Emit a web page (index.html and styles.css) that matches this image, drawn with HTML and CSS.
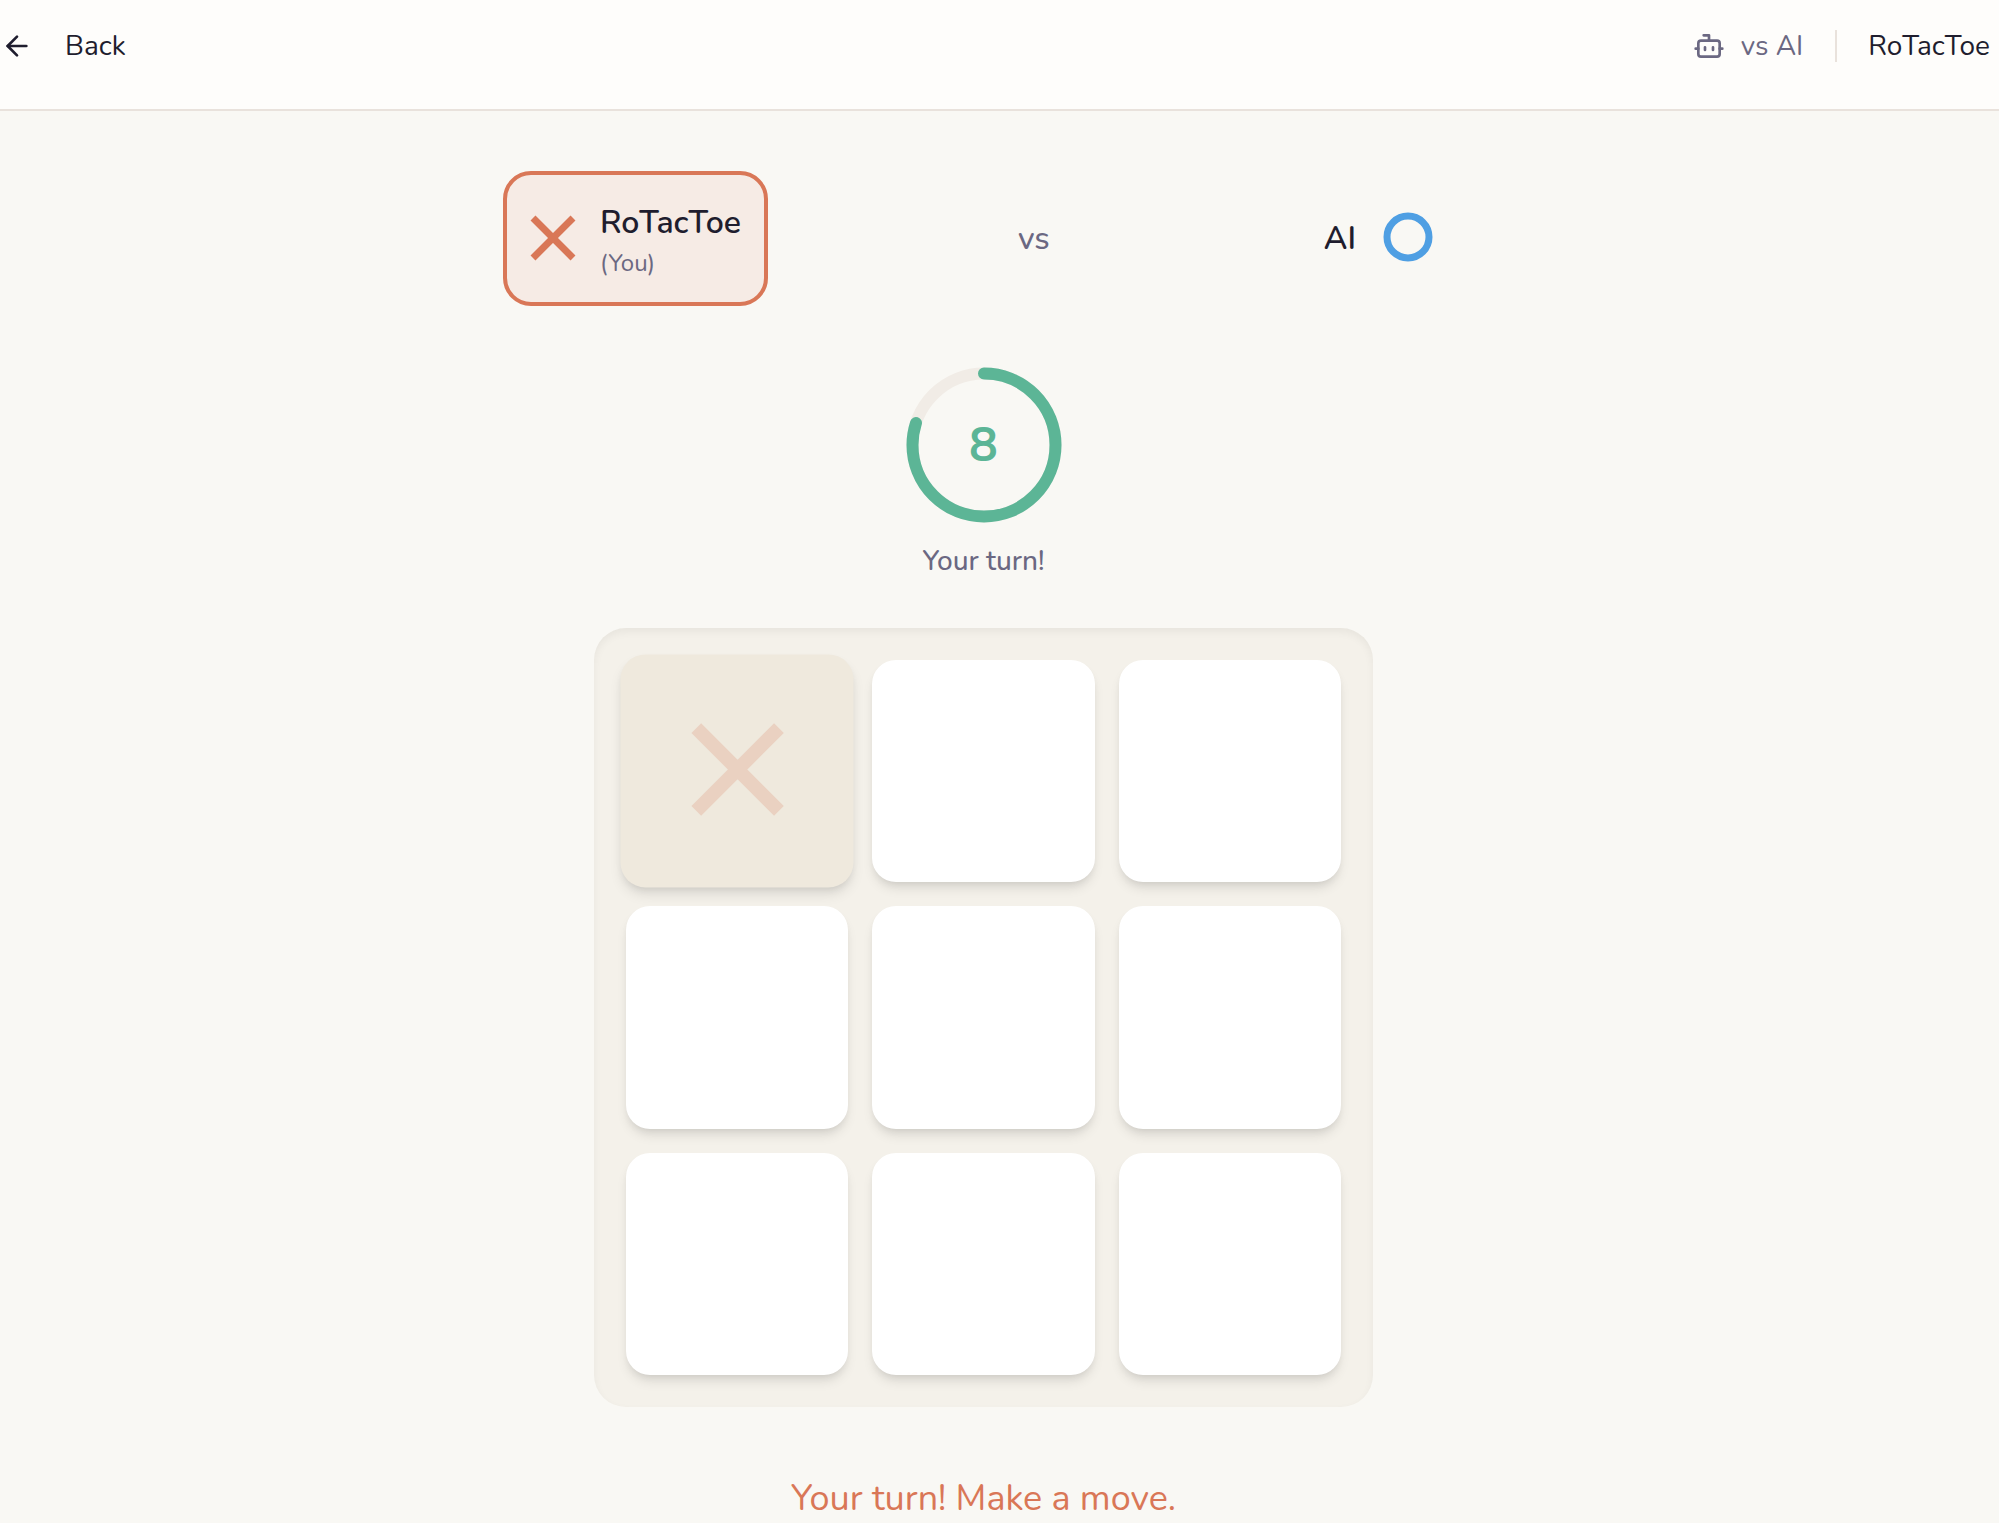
FILE: index.html
```html
<!doctype html>
<html lang="en">
<head>
    <meta charset="utf-8"/>
    <meta name="viewport" content="width=device-width,initial-scale=1.0" />
    <title>RoTacToe</title>
    <link rel="stylesheet" href="styles.css">
</head>
<body>

<header class="header">
    <button type="button" class="back">
        <svg class="icon" viewBox="0 0 24 24"><path d="m12 19-7-7 7-7"/><path d="M19 12H5"/></svg>
        Back
    </button>
    <div class="header-info">
        <span class="mode">
            <svg class="icon" viewBox="0 0 24 24"><path d="M12 8V4H8"/><rect width="16" height="12" x="4" y="8" rx="2"/><path d="M2 14h2M20 14h2M15 13v2M9 13v2"/></svg>
            vs AI
        </span>
        <span class="username">RoTacToe</span>
    </div>
</header>

<main class="game">
    <div class="players">
        <div class="player active">
            <svg class="mark mark-x" viewBox="0 0 64 64"><path d="M12 12 52 52M52 12 12 52"/></svg>
            <div>
                <div class="name">RoTacToe</div>
                <div class="you">(You)</div>
            </div>
        </div>
        <span class="vs">vs</span>
        <div class="player">
            <div class="name">AI</div>
            <svg class="mark mark-o" viewBox="0 0 64 64"><circle cx="32" cy="32" r="21"/></svg>
        </div>
    </div>

    <div class="timer">
        <svg class="ring" viewBox="0 0 160 160">
            <circle class="ring-bg" cx="80" cy="80" r="71.5"/>
            <circle class="ring-left" cx="80" cy="80" r="71.5" pathLength="100" transform="rotate(-90 80 80)"/>
        </svg>
        <span class="seconds">8</span>
    </div>
    <p class="turn">Your turn!</p>

    <div class="board">
        <button type="button" class="cell hover" aria-label="Cell 1">
            <svg class="ghost" viewBox="0 0 100 100"><path d="M20 20 80 80M80 20 20 80"/></svg>
        </button>
        <button type="button" class="cell" aria-label="Cell 2"></button>
        <button type="button" class="cell" aria-label="Cell 3"></button>
        <button type="button" class="cell" aria-label="Cell 4"></button>
        <button type="button" class="cell" aria-label="Cell 5"></button>
        <button type="button" class="cell" aria-label="Cell 6"></button>
        <button type="button" class="cell" aria-label="Cell 7"></button>
        <button type="button" class="cell" aria-label="Cell 8"></button>
        <button type="button" class="cell" aria-label="Cell 9"></button>
    </div>

    <p class="status">Your turn! Make a move.</p>
</main>

</body>
</html>
```
FILE: styles.css
```css
*{margin:0;padding:0;box-sizing:border-box}
body{font-family:Nunito,Lato,"Open Sans",sans-serif;font-size:28px;line-height:40px;color:#1f1d2e;background:#f9f8f4}
button{font:inherit;color:inherit;border:0;background:none;cursor:pointer}

.header{display:flex;justify-content:space-between;align-items:center;padding:26px 9px 43px 1px;background:#fefdfb;border-bottom:2px solid #e9e2dc}
.back{display:flex;align-items:center;gap:32px}
.icon{width:32px;height:32px;fill:none;stroke:currentColor;stroke-width:2;stroke-linecap:round;stroke-linejoin:round}
.header-info{display:flex;align-items:center}
.mode{display:flex;align-items:center;gap:16px;color:#6b6882}
.username{margin-left:32px;padding-left:31px;line-height:32px;border-left:2px solid #e9e2dc}

.game{padding:60px 32px 0 0}
.players{display:flex;justify-content:space-between;align-items:center;max-width:961px;margin:0 auto 59px}
.player{display:flex;align-items:center;gap:20px;padding:24px}
.active{gap:15px;padding:24px 23px 23px 14px;border:4px solid #d97757;border-radius:28px;background:#f6ebe5}
.name{font-size:32px;font-weight:600;line-height:48px}
.you{font-size:24px;line-height:32px;color:#6b6882}
.vs{font-size:32px;font-weight:500;color:#6b6882}
.mark,.ghost{margin-bottom:3px;fill:none}
.mark{width:64px;height:64px}
.mark-x{stroke:#d97757;stroke-width:7}
.mark-o{stroke:#4f9fe3;stroke-width:7}

.timer{display:grid;place-items:center;margin-bottom:16px}
.timer > *{grid-area:1/1}
.ring{width:160px;height:160px;fill:none;stroke-width:12}
.ring-bg{stroke:#f1ece6}
.ring-left{stroke:#5cb596;stroke-linecap:round;stroke-dasharray:80 100}
.seconds{font-size:48px;font-weight:700;line-height:48px;color:#5cb596}
.turn{margin-bottom:47px;font-weight:500;text-align:center;color:#6b6882}

.board{display:grid;grid-template-columns:repeat(3,1fr);gap:24px;max-width:779px;margin:0 auto 68px;padding:32px;border-radius:32px;background:#f4f1ea;box-shadow:inset 0 4px 8px rgba(0,0,0,.05)}
.cell{display:flex;align-items:center;justify-content:center;aspect-ratio:1;border-radius:24px;background:#fff;box-shadow:0 8px 12px -2px rgba(0,0,0,.1),0 4px 8px -4px rgba(0,0,0,.1)}
.hover{background:#efe9dd;transform:scale(1.05)}
.ghost{width:59%;stroke:#d97757;stroke-width:10;opacity:.2}

.status{font-size:36px;line-height:48px;text-align:center;color:#d97757}
```
